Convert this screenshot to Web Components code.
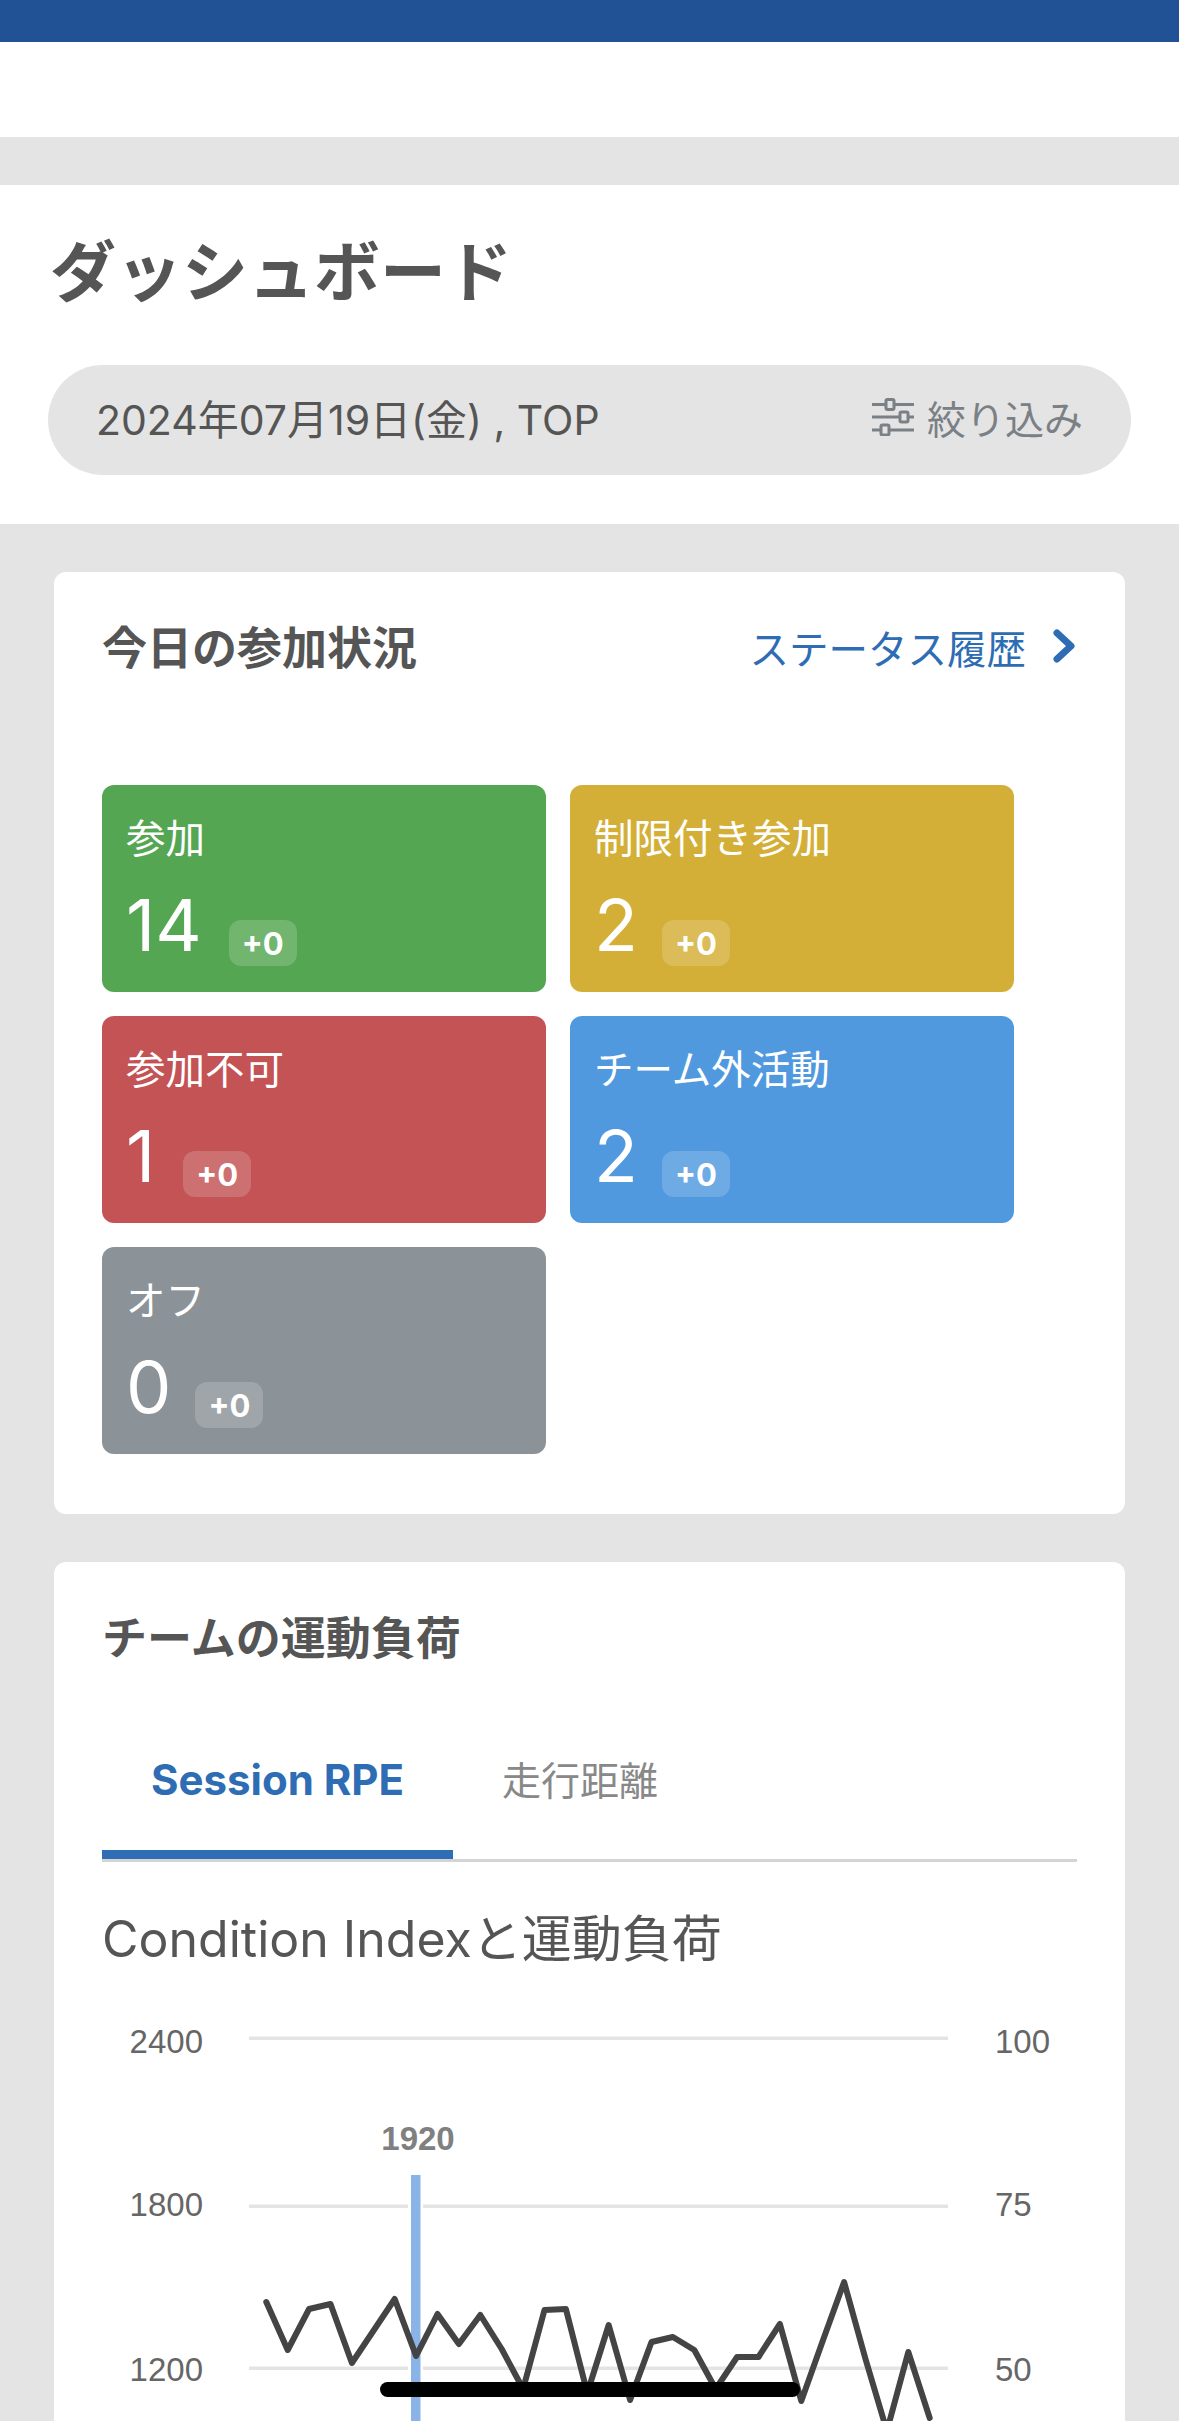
<!DOCTYPE html>
<html lang="ja">
<head>
<meta charset="utf-8">
<title>ダッシュボード</title>
<style>
  html, body { margin: 0; height: 2421px; overflow: hidden; }
  body {
    background: #e4e4e4;
    color: #555;
    font-family: Inter, "Noto Sans CJK JP", sans-serif;
  }
</style>
</head>
<body>
<app-header></app-header>
<page-head heading="ダッシュボード" summary="2024年07月19日(金) , TOP" filter="絞り込み"></page-head>

<dash-card heading="今日の参加状況">
  <a slot="action" is-link>ステータス履歴</a>
  <status-grid>
    <status-tile color="#55a652" count="14" style="--gap: 27px">参加</status-tile>
    <status-tile color="#d4af38" count="2">制限付き参加</status-tile>
    <status-tile color="#c35355" count="1" style="--gap: 28px">参加不可</status-tile>
    <status-tile color="#5199df" count="2">チーム外活動</status-tile>
    <status-tile color="#8c9398" count="0">オフ</status-tile>
  </status-grid>
</dash-card>

<dash-card heading="チームの運動負荷" class="load">
  <tab-bar active="Session RPE" other="走行距離"></tab-bar>
  <load-chart heading="Condition Indexと運動負荷"></load-chart>
</dash-card>

<home-indicator></home-indicator>

<script>
class AppHeader extends HTMLElement {
  constructor() {
    super();
    this.attachShadow({ mode: 'open' });
    this.shadowRoot.innerHTML = `
    <style>
      :host { display: block; height: 95px; background: #fff; border-top: 42px solid #215296; }
    </style>`;
  }
}

class PageHead extends HTMLElement {
  constructor() {
    super();
    this.attachShadow({ mode: 'open' });
  }

  connectedCallback() {
    this.shadowRoot.innerHTML = `
    <style>
      :host { display: block; margin-top: 48px; background: #fff; padding: 0 48px 49px; }
      h1 {
        margin: 0; height: 180px; box-sizing: border-box; display: flex; align-items: center;
        font-size: 66px; font-weight: 700; color: #555; padding: 0 0 16px 2px;
      }
      .pill {
        height: 110px; border-radius: 55px; background: #e4e4e4;
        display: flex; align-items: center; justify-content: space-between;
        padding: 0 48px 0 48px;
      }
      .summary { font-size: 41px; color: #555; padding-bottom: 6px; }
      .filter { display: flex; align-items: center; gap: 12px; font-size: 39px; color: #7b8085; padding-bottom: 6px; }
      svg { display: block; }
    </style>
    <h1>${this.getAttribute('heading')}</h1>
    <div class="pill">
      <span class="summary">${this.getAttribute('summary')}</span>
      <span class="filter">
        <svg width="44" height="38" viewBox="0 0 44 38" fill="none" stroke="#7b8085" stroke-width="3">
          <path d="M1 6.500h14M24 6.500h19M1 19h28M38 19h5M1 32h9M19 32h24"/>
          <rect x="15" y="1.500" width="8" height="10" rx="1.500"/>
          <rect x="29" y="14" width="8" height="10" rx="1.500"/>
          <rect x="10" y="27" width="8" height="10" rx="1.500"/>
        </svg>
        ${this.getAttribute('filter')}
      </span>
    </div>`;
  }
}

class DashCard extends HTMLElement {
  constructor() {
    super();
    this.attachShadow({ mode: 'open' });
  }

  connectedCallback() {
    this.shadowRoot.innerHTML = `
    <style>
      :host {
        display: block; margin: 48px 54px 0; background: #fff; border-radius: 12px;
        padding: 0 48px 60px; box-sizing: border-box;
      }
      .top { display: flex; justify-content: space-between; align-items: center; height: 152px; box-sizing: border-box; padding-bottom: 6px; }
      h2 { margin: 0; font-size: 45px; font-weight: 700; color: #555; }
      .action { display: flex; align-items: center; gap: 27px; font-size: 39.500px; color: #2e6db4; margin-top: 2px; }
      .action svg { display: block; margin-right: 2px; }
    </style>
    <div class="top">
      <h2>${this.getAttribute('heading')}</h2>
      ${this.querySelector('[slot=action]') ? `<div class="action"><slot name="action"></slot>
        <svg width="22" height="34" viewBox="0 0 22 34" fill="none" stroke="#2e6db4" stroke-width="7" stroke-linecap="round" stroke-linejoin="round"><path d="M4 4l14 13L4 30"/></svg></div>` : ''}
    </div>
    <slot></slot>`;
  }
}

class StatusGrid extends HTMLElement {
  constructor() {
    super();
    this.attachShadow({ mode: 'open' });
    this.shadowRoot.innerHTML = `
    <style>
      :host { display: grid; grid-template-columns: 444px 444px; gap: 24px; margin-top: 61px; }
    </style>
    <slot></slot>`;
  }
}

class StatusTile extends HTMLElement {
  constructor() {
    super();
    this.attachShadow({ mode: 'open' });
  }

  connectedCallback() {
    this.shadowRoot.innerHTML = `
    <style>
      :host {
        display: block; height: 207px; box-sizing: border-box; border-radius: 12px;
        padding: 28px 24px 0; color: #fff; background: ${this.getAttribute('color')};
        font-size: 39.500px;
      }
      .label { line-height: 52px; height: 52px; }
      .row { display: flex; align-items: flex-end; margin-top: 22px; gap: var(--gap, 24px); }
      .count { font-size: 72px; line-height: 76px; }
      .diff {
        width: 68px; height: 46px; border-radius: 12px; background: rgba(255,255,255,.17);
        display: flex; align-items: center; justify-content: center;
        font-size: 31px; font-weight: 700; margin-bottom: -3px;
      }
    </style>
    <div class="label"><slot></slot></div>
    <div class="row">
      <span class="count">${this.getAttribute('count')}</span>
      <span class="diff">+0</span>
    </div>`;
  }
}

class TabBar extends HTMLElement {
  constructor() {
    super();
    this.attachShadow({ mode: 'open' });
  }

  connectedCallback() {
    this.shadowRoot.innerHTML = `
    <style>
      :host { display: flex; height: 154px; margin-top: -6px; box-sizing: border-box; border-bottom: 3px solid #d4d4d4; }
      .tab { display: flex; align-items: center; box-sizing: border-box; height: 151px; }
      .on {
        width: 351px; justify-content: center; font-size: 42px; font-weight: 700; color: #2e6db4;
        border-bottom: 9px solid #2f6db5; padding-top: 1px;
      }
      .off { padding-left: 49px; font-size: 39px; color: #888; padding-bottom: 12px; }
    </style>
    <div class="tab on">${this.getAttribute('active')}</div>
    <div class="tab off">${this.getAttribute('other')}</div>`;
  }
}

class LoadChart extends HTMLElement {
  constructor() {
    super();
    this.attachShadow({ mode: 'open' });
  }

  connectedCallback() {
    // y of the line in page pixels, one point every 21.4px from x=266.3
    const ys = [2301, 2349, 2308, 2303, 2362, 2330, 2298, 2355, 2313, 2343, 2314, 2348, 2388, 2309, 2308,
      2392, 2324, 2399, 2341, 2336, 2349, 2388, 2356, 2356, 2323, 2400, 2340, 2281, 2358, 2430, 2351, 2417];
    const line = ys.map((y, i) => `${(266.3 + i * 21.4).toFixed(1)},${y}`).join(' ');
    const grid = [2037, 2205, 2367];
    const labels = [['2400', '100', 2052], ['1800', '75', 2215], ['1200', '50', 2380]];
    this.shadowRoot.innerHTML = `
    <style>
      :host { display: block; }
      h3 {
        margin: 0; height: 129px; box-sizing: border-box; display: flex; align-items: center;
        font-size: 50px; font-weight: 400; color: #555; padding-top: 16px;
      }
      svg { display: block; margin: 0 -48px; font-family: "Liberation Sans", sans-serif; font-size: 33px; fill: #666; }
      .val { font-weight: 700; fill: #808080; text-anchor: middle; }
    </style>
    <h3>${this.getAttribute('heading')}</h3>
    <svg width="1071" height="460" viewBox="54 1990 1071 460">
      ${grid.map(y => `<rect x="249" y="${y - 1.5}" width="699" height="3.500" fill="#e4e4e4"/>`).join('')}
      ${labels.map(([l, r, y]) => `<text x="203" y="${y}" text-anchor="end">${l}</text><text x="995" y="${y}">${r}</text>`).join('')}
      <rect x="408" y="2174" width="15" height="280" fill="#fff"/>
      <rect x="411" y="2174" width="9.500" height="280" fill="#8ab4e8"/>
      <text class="val" x="418" y="2149">1920</text>
      <text class="val" x="610" y="2444">960</text>
      <polyline points="${line}" fill="none" stroke="#444" stroke-width="6" stroke-linejoin="round" stroke-linecap="round"/>
    </svg>`;
  }
}

class HomeIndicator extends HTMLElement {
  constructor() {
    super();
    this.attachShadow({ mode: 'open' });
    this.shadowRoot.innerHTML = `
    <style>
      :host { position: fixed; left: 380px; top: 2382px; width: 420px; height: 15px; border-radius: 8px; background: #000; }
    </style>`;
  }
}

customElements.define('app-header', AppHeader);
customElements.define('page-head', PageHead);
customElements.define('dash-card', DashCard);
customElements.define('status-grid', StatusGrid);
customElements.define('status-tile', StatusTile);
customElements.define('tab-bar', TabBar);
customElements.define('load-chart', LoadChart);
customElements.define('home-indicator', HomeIndicator);
</script>
</body>
</html>
